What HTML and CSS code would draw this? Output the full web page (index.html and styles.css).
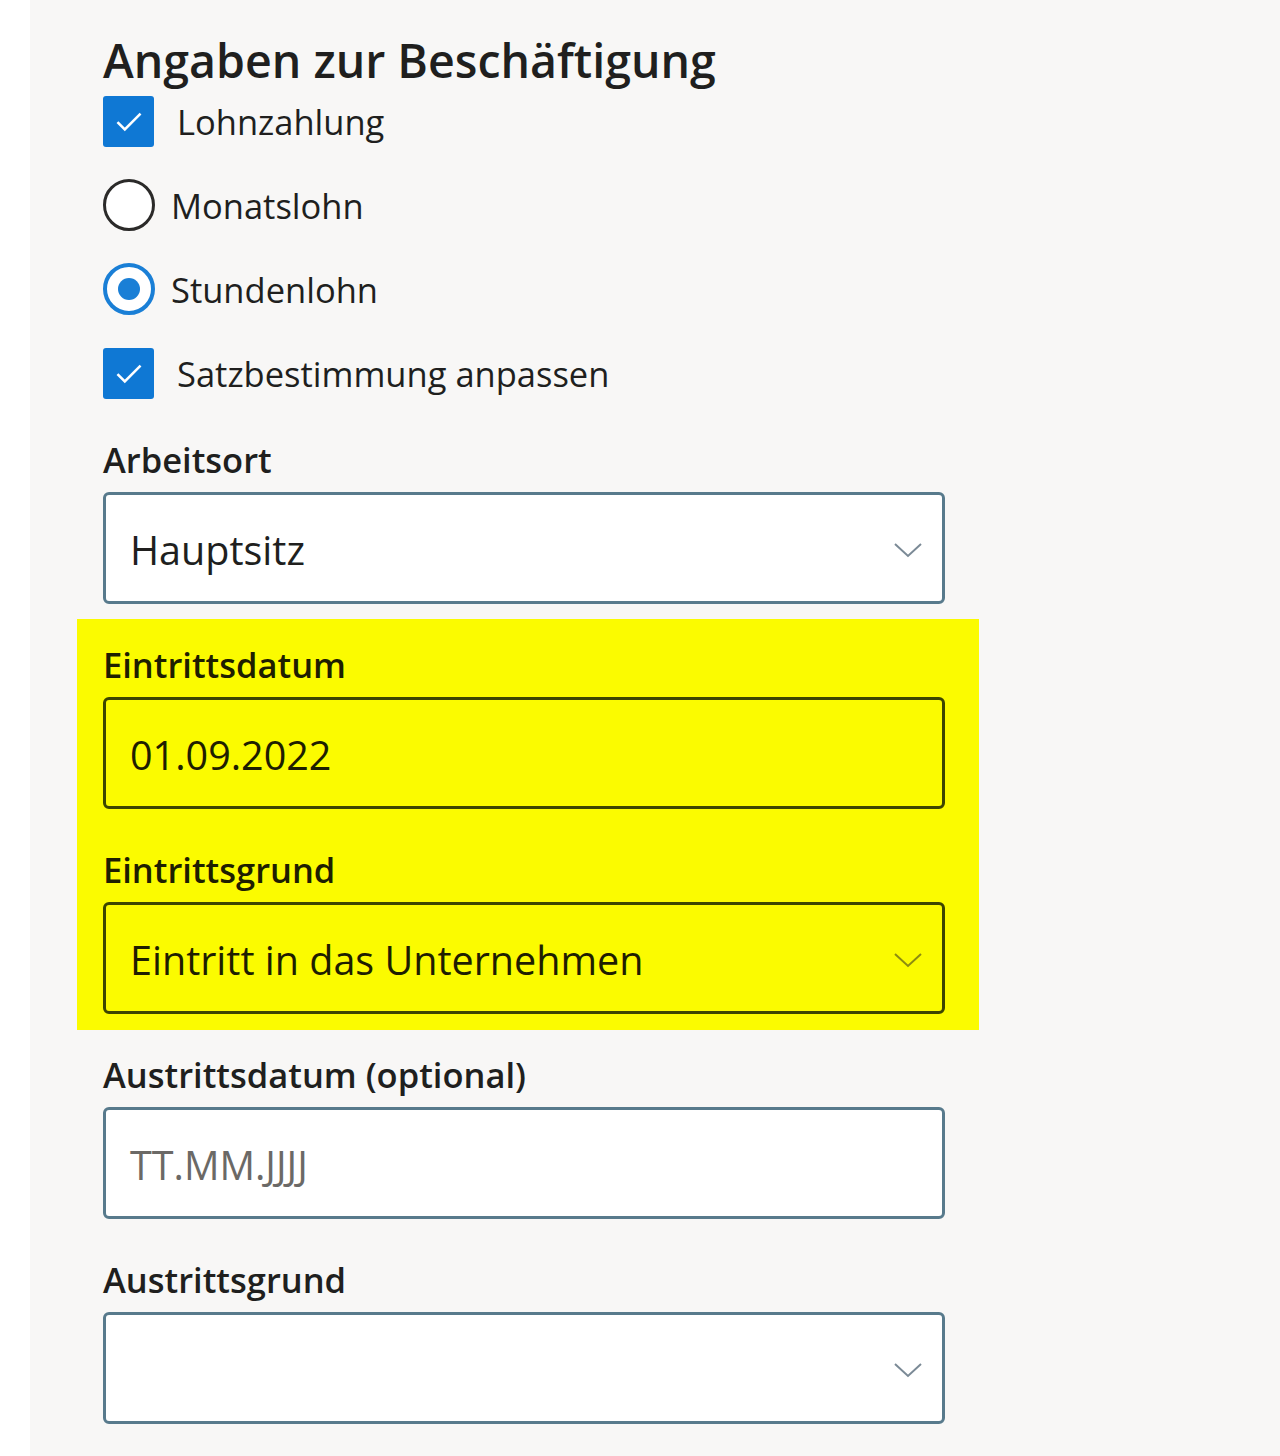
FILE: index.html
```html
<!DOCTYPE html>
<html>

<head>
    <meta charset="utf-8">
    <title>Angaben zur Beschäftigung</title>
    <link rel="stylesheet" href="styles.css">
</head>

<body>
    <div class="panel">
        <h2 class="section-title">Angaben zur Beschäftigung</h2>

        <div class="options">
            <div class="option">
                <span class="checkbox checked">
                    <svg viewBox="0 0 20 20"><path d="M4.5 10.5 L8 14 L15.5 6.5" fill="none" stroke="#fff" stroke-width="1.2" /></svg>
                </span>
                <span class="option-label check-label">Lohnzahlung</span>
            </div>
            <div class="option">
                <span class="radio"></span>
                <span class="option-label">Monatslohn</span>
            </div>
            <div class="option">
                <span class="radio selected"></span>
                <span class="option-label">Stundenlohn</span>
            </div>
            <div class="option">
                <span class="checkbox checked">
                    <svg viewBox="0 0 20 20"><path d="M4.5 10.5 L8 14 L15.5 6.5" fill="none" stroke="#fff" stroke-width="1.2" /></svg>
                </span>
                <span class="option-label check-label">Satzbestimmung anpassen</span>
            </div>
        </div>

        <div class="fields">
            <div class="field">
                <label class="field-label">Arbeitsort</label>
                <div class="field-box dropdown">
                    <span class="field-value">Hauptsitz</span>
                    <svg class="chevron" viewBox="0 0 28 16" width="28" height="16"><path d="M1 2 L14 14 L27 2" fill="none" stroke="#7b8a96" stroke-width="2" /></svg>
                </div>
            </div>

            <div class="highlight">
                <div class="field">
                    <label class="field-label">Eintrittsdatum</label>
                    <div class="field-box">
                        <span class="field-value">01.09.2022</span>
                    </div>
                </div>
                <div class="field">
                    <label class="field-label">Eintrittsgrund</label>
                    <div class="field-box dropdown">
                        <span class="field-value">Eintritt in das Unternehmen</span>
                        <svg class="chevron" viewBox="0 0 28 16" width="28" height="16"><path d="M1 2 L14 14 L27 2" fill="none" stroke="#8c8c10" stroke-width="2" /></svg>
                    </div>
                </div>
            </div>

            <div class="field">
                <label class="field-label">Austrittsdatum (optional)</label>
                <div class="field-box">
                    <span class="field-value placeholder">TT.MM.JJJJ</span>
                </div>
            </div>

            <div class="field">
                <label class="field-label">Austrittsgrund</label>
                <div class="field-box dropdown">
                    <span class="field-value"></span>
                    <svg class="chevron" viewBox="0 0 28 16" width="28" height="16"><path d="M1 2 L14 14 L27 2" fill="none" stroke="#7b8a96" stroke-width="2" /></svg>
                </div>
            </div>
        </div>
    </div>
</body>

</html>
```

FILE: styles.css
```css
body {
    margin: 0;
    padding: 0;
    background-color: #ffffff;
    font-family: "Open Sans", "Noto Sans", sans-serif;
    color: #201f1e;
}

.panel {
    margin-left: 30px;
    min-height: 1456px;
    box-sizing: border-box;
    background-color: #f8f7f6;
    padding: 32px 0 0 73px;
}

.section-title {
    margin: 0;
    font-size: 46.5px;
    line-height: 56px;
    font-weight: 600;
}

.options {
    display: flex;
    flex-direction: column;
    gap: 32px;
    margin-top: 7px;
}

.option {
    display: flex;
    align-items: center;
    height: 52px;
}

.checkbox {
    width: 51px;
    height: 51px;
    box-sizing: border-box;
    border-radius: 3px;
    display: flex;
    align-items: center;
    justify-content: center;
}

.checkbox.checked {
    background-color: #0f78d4;
}

.checkbox svg {
    width: 42px;
    height: 42px;
}

.radio {
    width: 52px;
    height: 52px;
    box-sizing: border-box;
    border: 3px solid #2b2a29;
    border-radius: 50%;
    background-color: #ffffff;
    display: flex;
    align-items: center;
    justify-content: center;
}

.radio.selected {
    border: 4px solid #1a7fd6;
}

.radio.selected::after {
    content: "";
    width: 22px;
    height: 22px;
    border-radius: 50%;
    background-color: #1a7fd6;
}

.option-label {
    margin-left: 16px;
    font-size: 34.5px;
}

.option-label.check-label {
    margin-left: 23px;
}

.fields {
    display: flex;
    flex-direction: column;
    gap: 37px;
    margin-top: 37px;
    width: 842px;
}

.field {
    display: flex;
    flex-direction: column;
    gap: 8px;
}

.field-label {
    font-size: 34.5px;
    font-weight: 600;
    line-height: 48px;
}

.field-box {
    height: 112px;
    box-sizing: border-box;
    border: 3px solid #587a8c;
    border-radius: 6px;
    background-color: #ffffff;
    padding: 4px 20px 0 24px;
    display: flex;
    align-items: center;
    justify-content: space-between;
}

.field-value {
    font-size: 39.5px;
}

.field-value.placeholder {
    color: #6b6966;
}

.chevron {
    flex-shrink: 0;
}

.highlight {
    display: flex;
    flex-direction: column;
    gap: 37px;
    margin: -22px -34px -16px -26px;
    padding: 22px 34px 16px 26px;
    background-color: #fbfb00;
}

.highlight .field-box {
    background-color: transparent;
    border-color: #3c4500;
}

.highlight .field-value,
.highlight .field-label {
    color: #1e1e00;
}
```
